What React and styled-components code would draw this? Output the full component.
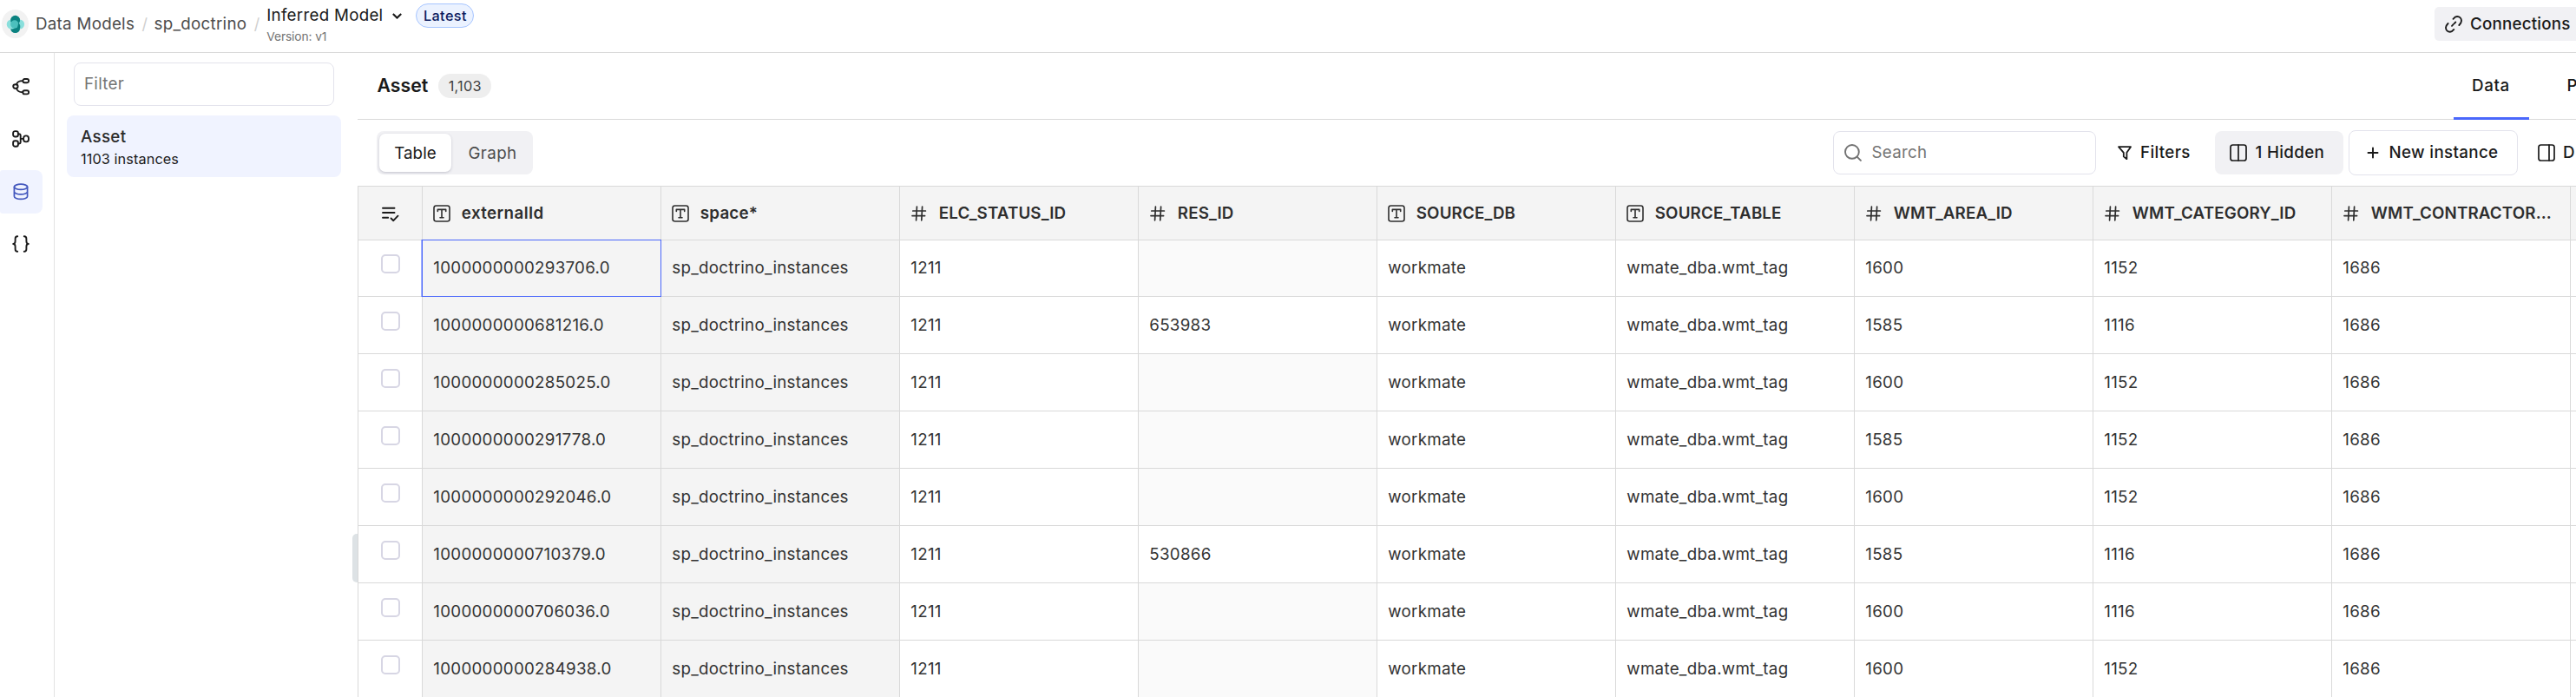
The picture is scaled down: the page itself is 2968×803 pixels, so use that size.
import React from "react";
import styled, { createGlobalStyle } from "styled-components";

const line = "#d9d9d9";
const soft = "#e3e3ec";
const ink = "#1a1a1a";
const accent = "#4a67fb";

const Global = createGlobalStyle`
  *, *::before, *::after { box-sizing: border-box; }
  body { margin: 0; background: #fff; overflow: hidden; }
  button, input { font: inherit; letter-spacing: inherit; color: inherit; }
`;

const Page = styled.div`
  width: 2968px;
  height: 803px;
  overflow: hidden;
  display: flex;
  flex-direction: column;
  background: #fff;
  color: ${ink};
  font-family: Inter, sans-serif;
  font-size: 18.75px;
  line-height: 24px;
  letter-spacing: 0.27px;
  white-space: nowrap;
`;

/* Top bar */
const TopBar = styled.header`
  flex: none;
  height: 61px;
  display: flex;
  align-items: flex-start;
  justify-content: space-between;
  border-bottom: 1px solid ${line};
  padding-left: 2px;
`;
const Crumbs = styled.nav`
  display: flex;
  align-items: flex-start;
`;
const LogoBadge = styled.span`
  width: 31px;
  height: 33px;
  margin-top: 11px;
  border-radius: 50%;
  background: #f2f2f2;
  display: flex;
  align-items: center;
  justify-content: center;
`;
const Crumb = styled.a`
  margin: 16px 0 0 ${(p) => p.$gap || 8}px;
  color: #4d4d4d;
`;
const Slash = styled.span`
  margin: 16px 0 0 8.5px;
  width: 7px;
  color: #d0d0d0;
  font-size: 18px;
  letter-spacing: 0;
`;
const ModelTitle = styled.div`
  margin: 6px 0 0 7.5px;
  display: flex;
  flex-direction: column;
`;
const ModelName = styled.div`
  height: 24px;
  display: flex;
  align-items: center;
  gap: 11px;
`;
const ModelVersion = styled.div`
  height: 24px;
  font-size: 13.75px;
  letter-spacing: -0.1px;
  color: #737373;
`;
const LatestPill = styled.span`
  width: 67px;
  height: 28px;
  margin: 4px 0 0 16px;
  border: 1px solid #a6c5ff;
  border-radius: 14px;
  background: #ebf2ff;
  color: #0b1b5e;
  font-size: 16.25px;
  font-weight: 500;
  letter-spacing: 0.4px;
  display: flex;
  align-items: center;
  justify-content: center;
`;
const ConnectionsButton = styled.button`
  width: 163px;
  height: 39px;
  margin-top: 8px;
  padding: 0 0 0 12px;
  border: 0;
  border-radius: 5px 0 0 5px;
  background: #f1f1f4;
  font-weight: 500;
  letter-spacing: 0.2px;
  display: flex;
  align-items: center;
  gap: 9px;
`;

/* Body */
const Body = styled.div`
  flex: 1;
  min-height: 0;
  display: flex;
`;
const Rail = styled.aside`
  flex: none;
  width: 63px;
  border-right: 1px solid #e3e3e3;
  padding-top: 14px;
  display: flex;
  flex-direction: column;
  gap: 11px;
`;
const RailButton = styled.button`
  width: 49px;
  height: 49.5px;
  padding: 0 1px 0 0;
  border: 0;
  border-radius: 3px 8px 8px 3px;
  background: ${(p) => (p.$active ? "#f0f3ff" : "transparent")};
  color: ${(p) => (p.$active ? "#4256bd" : ink)};
  display: flex;
  align-items: center;
  justify-content: center;
`;
const Sidebar = styled.aside`
  flex: none;
  width: 349px;
  padding: 11px 19px 0 14px;
  position: relative;
`;
const FilterInput = styled.input`
  display: block;
  width: 300px;
  height: 50px;
  margin-left: 8px;
  padding: 0 0 2px 11px;
  border: 1px solid ${soft};
  border-radius: 8px;
  background: #fff;
  outline: none;
  &::placeholder { color: #757575; opacity: 1; }
`;
const TypeItem = styled.div`
  width: 316px;
  height: 71px;
  margin-top: 11px;
  padding: 13px 16px;
  border-radius: 8px;
  background: #f0f3ff;
`;
const TypeName = styled.div`
  height: 24.5px;
  font-weight: 450;
  color: #2b2b2b;
  letter-spacing: 0.3px;
`;
const TypeCount = styled.div`
  font-size: 16.25px;
  letter-spacing: 0.1px;
`;
const ResizeHandle = styled.div`
  position: absolute;
  right: 0;
  top: 554px;
  width: 6px;
  height: 56px;
  border-radius: 5px 0 0 5px;
  background: #dde2e5;
`;

/* Main */
const Main = styled.main`
  flex: none;
  width: 2556px;
  display: flex;
  flex-direction: column;
`;
const Heading = styled.div`
  height: 77px;
  flex: none;
  border-bottom: 1px solid ${line};
  padding-left: 22.5px;
  display: flex;
  align-items: center;
`;
const Title = styled.h1`
  margin: 0 0 3px;
  font-size: 21.25px;
  font-weight: 600;
  letter-spacing: 0;
`;
const CountPill = styled.span`
  width: 61px;
  height: 28px;
  margin: 0 0 1px 12px;
  border-radius: 14px;
  background: #eee;
  color: #404040;
  font-size: 16.25px;
  display: flex;
  align-items: center;
  justify-content: center;
`;
const Tabs = styled.div`
  margin-left: auto;
  height: 77px;
  width: 141px;
  display: flex;
`;
const Tab = styled.div`
  flex: none;
  width: 87px;
  height: 77px;
  padding: 3px 0 0 ${(p) => (p.$active ? 21 : 43.5)}px;
  border-bottom: 3px solid ${(p) => (p.$active ? accent : "transparent")};
  font-weight: 500;
  letter-spacing: 0.6px;
  display: flex;
  align-items: center;
  position: relative;
  z-index: 1;
`;
const Toolbar = styled.div`
  flex: none;
  height: 76px;
  padding-left: 22px;
  display: flex;
  align-items: center;
`;
const Segmented = styled.div`
  width: 180px;
  height: 50px;
  padding: 3px;
  border-radius: 8px;
  background: #f1f1f4;
  display: flex;
`;
const Segment = styled.button`
  width: ${(p) => (p.$active ? 83 : 88)}px;
  height: 44px;
  padding: 1px 0 0 ${(p) => (p.$active ? 0 : 7)}px;
  border: 0;
  border-radius: 7px;
  background: ${(p) => (p.$active ? "#fff" : "transparent")};
  box-shadow: ${(p) => (p.$active ? "0 1px 3px rgba(60,60,90,0.25)" : "none")};
  color: ${(p) => (p.$active ? ink : "#4d4d4d")};
  letter-spacing: ${(p) => (p.$active ? 0.1 : 0.4)}px;
  text-align: center;
`;
const SearchBox = styled.label`
  margin-left: auto;
  width: 303px;
  height: 50px;
  padding: 0 12px 1px;
  border: 1px solid ${soft};
  border-radius: 8px;
  color: #737373;
  display: flex;
  align-items: center;
  gap: 11.5px;
`;
const SearchInput = styled.input`
  flex: 1;
  min-width: 0;
  padding: 0;
  border: 0;
  outline: none;
  background: transparent;
  &::placeholder { color: #757575; opacity: 1; }
`;
const ToolButton = styled.button`
  flex: none;
  width: ${(p) => p.$w}px;
  height: ${(p) => (p.$outlined ? 52 : 50)}px;
  margin-left: ${(p) => p.$ml}px;
  padding: 0 0 0 ${(p) => p.$pl}px;
  border: ${(p) => (p.$outlined ? `1px solid ${soft}` : "0")};
  border-radius: 8px;
  background: ${(p) => (p.$filled ? "#f1f1f4" : "transparent")};
  font-weight: 500;
  letter-spacing: 0.35px;
  display: flex;
  align-items: center;
  gap: ${(p) => p.$gap}px;
`;

/* Table */
const Table = styled.div`
  flex: 1;
  min-height: 0;
  border-top: 1px solid ${line};
  border-left: 1px solid ${line};
  overflow: hidden;
`;
const HeaderRow = styled.div`
  height: 62px;
  display: flex;
  background: #f4f4f4;
  border-bottom: 1px solid ${line};
  position: relative;
  z-index: 1;
`;
const Row = styled.div`
  height: 66px;
  display: flex;
  border-bottom: 1px solid ${line};
  &:nth-child(2) { margin-top: -1px; }
`;
const HeaderCell = styled.div`
  flex: none;
  width: 275px;
  padding-left: 12.3px;
  border-right: 1px solid ${line};
  color: #2e2e2e;
  font-weight: 600;
  letter-spacing: ${(p) => p.$ls || 0.13}px;
  display: flex;
  align-items: center;
  gap: 12.5px;
`;
const HeaderSelect = styled.div`
  flex: none;
  width: 74px;
  border-right: 1px solid ${line};
  display: flex;
  align-items: center;
  justify-content: center;
`;
const SelectCell = styled.div`
  flex: none;
  width: 74px;
  padding: 17px 0 0 26px;
  border-right: 1px solid ${line};
`;
const Checkbox = styled.span`
  display: block;
  width: 22px;
  height: 22px;
  border: 2px solid #d7d6e4;
  border-radius: 5px;
  background: #fff;
`;
const Cell = styled.div`
  flex: none;
  width: 275px;
  padding: 1px 0 0 12.3px;
  border-right: 1px solid ${line};
  background: ${(p) => p.$bg};
  color: #333;
  display: flex;
  align-items: center;
  position: relative;
`;
const Selection = styled.span`
  position: absolute;
  z-index: 2;
  inset: 0 -1px -1px -1px;
  border: 1px solid ${accent};
  box-shadow: -1px 0 0 rgba(74, 103, 251, 0.5);
`;

/* Icons */
const IconSvg = styled.svg`
  flex: none;
  fill: none;
  stroke: currentColor;
  stroke-linecap: round;
  stroke-linejoin: round;
`;
const Icon = ({ children, w = 1.6 }) => (
  <IconSvg width="20" height="20" viewBox="0 0 20 20" strokeWidth={w}>{children}</IconSvg>
);
const Logo = () => (
  <svg width="31" height="33" viewBox="0 0 31 33">
    <circle cx="15.6" cy="12.3" r="5.5" fill="#0b8280" />
    <circle cx="15.6" cy="21.5" r="5.5" fill="#0b8280" />
    <circle cx="11.2" cy="17" r="5.5" fill="#8adfdc" />
    <circle cx="20.6" cy="17" r="5.5" fill="#8adfdc" />
    <path d="M10.2 13.400a5.500 5.500 0 0 1 10.700-1.800c.6 2.600-1 5-3.500 5.700-2.900.8-6.200-1-7.200-3.900Z" fill="#0b8280" />
    <circle cx="14.8" cy="17" r="4.700" fill="#4cc0bd" />
    <path d="M19 15c2.400 1.700 3 4.800 1.600 7.700a5.500 5.500 0 0 1-9.300 1.800c4.300-.4 8-3.800 7.700-9.500Z" fill="#0b8280" />
  </svg>
);
const TreeIcon = () => (
  <Icon w={1.9}>
    <ellipse cx="3.900" cy="9.600" rx="2.700" ry="2.300" />
    <rect x="12.400" y="1" width="6.700" height="4.200" rx="1.900" />
    <rect x="12.400" y="14.200" width="6.700" height="4.200" rx="1.900" />
    <path d="M5 7.300C5.800 4 8 3.100 12.200 3.100M5 11.900c.8 3.300 3 4.400 7.200 4.400" />
  </Icon>
);
const MergeIcon = () => (
  <Icon w={1.9}>
    <rect x="1.100" y="1.100" width="5.800" height="6.400" rx="2.300" />
    <rect x="1.100" y="12.300" width="5.800" height="6.400" rx="2.300" />
    <rect x="13.100" y="6.400" width="5.900" height="7" rx="2.900" />
    <path d="M6.900 4.200h.8c1.200 0 2 .8 2 2v7.400c0 1.200-.8 2-2 2h-.8M9.900 9.900h3" />
  </Icon>
);
const DatabaseIcon = () => (
  <Icon w={1.7}>
    <ellipse cx="10" cy="4.300" rx="7.600" ry="3.100" />
    <path d="M2.400 4.300v11c0 1.700 3.400 3.100 7.600 3.100s7.600-1.400 7.600-3.100v-11M2.400 9.800c0 1.700 3.400 3.100 7.600 3.100s7.600-1.400 7.600-3.100" />
  </Icon>
);
const BracesIcon = () => (
  <Icon w={1.9}>
    <path d="M6.200 1.200c-2 0-2.600 1-2.600 2.800v2.800c0 1.900-.8 3.200-2.400 3.200 1.600 0 2.400 1.300 2.400 3.200V16c0 1.800.6 2.800 2.600 2.800M13.800 1.200c2 0 2.600 1 2.600 2.800v2.800c0 1.900.8 3.200 2.400 3.200-1.600 0-2.400 1.300-2.400 3.200V16c0 1.800-.6 2.800-2.600 2.800" />
  </Icon>
);
const ChevronIcon = () => (
  <svg width="11" height="7" viewBox="0 0 11 7" fill="none" stroke="currentColor" strokeWidth="2.100">
    <path d="M.8 1l4.700 4.600L10.200 1" />
  </svg>
);
const LinkIcon = () => (
  <Icon w={1.9}>
    <path d="M8 11.800l1.600-1.600M10.700 9.100l1.600-1.600" />
    <path d="M9.500 3.800C11.300 1.600 12.500 1 14 1c2.900 0 5 2.200 5 5 0 1.700-.7 2.800-2.700 5M10.300 15.900C8.600 18 7.400 18.800 5.900 18.800c-2.800 0-4.900-2.200-4.900-5 0-1.600.6-2.700 2.600-4.800" />
  </Icon>
);
const SearchIcon = () => (
  <Icon w={1.9}>
    <circle cx="8.900" cy="8.900" r="7.900" />
    <path d="M14.600 14.600l4.300 4.300" />
  </Icon>
);
const FunnelIcon = () => (
  <Icon w={1.8}>
    <path d="M3 3.200h14l-4.600 6.600v7.400l-3.600-2.800V9.800z" />
  </Icon>
);
const ColumnsIcon = ({ at = 10 }) => (
  <Icon w={1.7}>
    <rect x="1" y="1" width="18" height="18" rx="2.600" />
    <path d={`M${at} 1v18`} />
  </Icon>
);
const PlusIcon = () => (
  <Icon w={1.9}>
    <path d="M10 4.500v11M4.500 10h11" />
  </Icon>
);
const ListCheckIcon = () => (
  <Icon w={1.9}>
    <path d="M1 3.700h13.500M1 9h13.500M1 14.700h6.200M10.500 15.500l2.800 2.700 5.200-5.500" />
  </Icon>
);
const TextIcon = () => (
  <Icon w={1.6}>
    <rect x="1" y="1" width="18" height="18" rx="2.600" />
    <path d="M5.300 7.400V5.400h9.400v2M10 5.400v9.400M8 14.800h4" />
  </Icon>
);
const HashIcon = () => (
  <Icon w={1.7}>
    <path d="M2.800 7h14.600M2 12.600h14.600M7.400 2.200L6.600 17.800M13.600 2.200l-.8 15.600" />
  </Icon>
);

const columns = [
  ["externalId", "text", 0.4],
  ["space*", "text", 0.2],
  ["ELC_STATUS_ID", "num"],
  ["RES_ID", "num"],
  ["SOURCE_DB", "text"],
  ["SOURCE_TABLE", "text"],
  ["WMT_AREA_ID", "num"],
  ["WMT_CATEGORY_ID", "num"],
  ["WMT_CONTRACTOR...", "num"],
];
const rows = [
  ["1000000000293706.0", "", "1600", "1152"],
  ["1000000000681216.0", "653983", "1585", "1116"],
  ["1000000000285025.0", "", "1600", "1152"],
  ["1000000000291778.0", "", "1585", "1152"],
  ["1000000000292046.0", "", "1600", "1152"],
  ["1000000000710379.0", "530866", "1585", "1116"],
  ["1000000000706036.0", "", "1600", "1116"],
  ["1000000000284938.0", "", "1600", "1152"],
].map(([id, res, area, category]) => [
  id, "sp_doctrino_instances", "1211", res, "workmate", "wmate_dba.wmt_tag", area, category, "1686",
]);
const cellBackground = (value, col) => (col < 2 ? "#f4f4f4" : value === "" ? "#fafafa" : "#fff");

export default function App() {
  return (
    <Page>
      <Global />
      <TopBar>
        <Crumbs>
          <LogoBadge><Logo /></LogoBadge>
          <Crumb>Data Models</Crumb>
          <Slash>/</Slash>
          <Crumb $gap={7}>sp_doctrino</Crumb>
          <Slash>/</Slash>
          <ModelTitle>
            <ModelName>Inferred Model <ChevronIcon /></ModelName>
            <ModelVersion>Version: v1</ModelVersion>
          </ModelTitle>
          <LatestPill>Latest</LatestPill>
        </Crumbs>
        <ConnectionsButton><LinkIcon />Connections</ConnectionsButton>
      </TopBar>
      <Body>
        <Rail>
          <RailButton><TreeIcon /></RailButton>
          <RailButton><MergeIcon /></RailButton>
          <RailButton $active><DatabaseIcon /></RailButton>
          <RailButton><BracesIcon /></RailButton>
        </Rail>
        <Sidebar>
          <FilterInput placeholder="Filter" />
          <TypeItem>
            <TypeName>Asset</TypeName>
            <TypeCount>1103 instances</TypeCount>
          </TypeItem>
          <ResizeHandle />
        </Sidebar>
        <Main>
          <Heading>
            <Title>Asset</Title>
            <CountPill>1,103</CountPill>
            <Tabs>
              <Tab $active>Data</Tab>
              <Tab>P</Tab>
            </Tabs>
          </Heading>
          <Toolbar>
            <Segmented>
              <Segment $active>Table</Segment>
              <Segment>Graph</Segment>
            </Segmented>
            <SearchBox>
              <SearchIcon />
              <SearchInput placeholder="Search" />
            </SearchBox>
            <ToolButton $w={110} $ml={15} $pl={8} $gap={8}><FunnelIcon />Filters</ToolButton>
            <ToolButton $w={148} $ml={12} $pl={17} $gap={9.5} $filled><ColumnsIcon />1 Hidden</ToolButton>
            <ToolButton $w={195} $ml={6} $pl={17} $gap={8.5} $outlined><PlusIcon />New instance</ToolButton>
            <ToolButton $w={57} $ml={10} $pl={13} $gap={9}><ColumnsIcon at={13} />D</ToolButton>
          </Toolbar>
          <Table>
            <HeaderRow>
              <HeaderSelect><ListCheckIcon /></HeaderSelect>
              {columns.map(([name, kind, ls]) => (
                <HeaderCell key={name} $ls={ls}>
                  {kind === "text" ? <TextIcon /> : <HashIcon />}
                  {name}
                </HeaderCell>
              ))}
            </HeaderRow>
            {rows.map((row, r) => (
              <Row key={row[0]}>
                <SelectCell><Checkbox /></SelectCell>
                {row.map((value, c) => (
                  <Cell key={c} $bg={cellBackground(value, c)}>
                    {value}
                    {r === 0 && c === 0 && <Selection />}
                  </Cell>
                ))}
              </Row>
            ))}
          </Table>
        </Main>
      </Body>
    </Page>
  );
}
